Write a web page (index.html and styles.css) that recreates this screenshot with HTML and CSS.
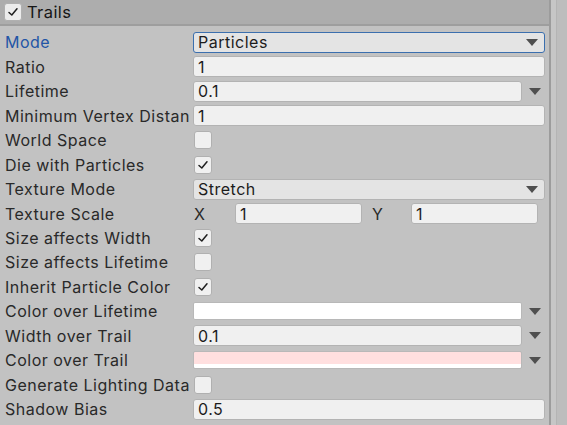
FILE: index.html
```html
<!DOCTYPE html>
<html>
<head>
<meta charset="utf-8">
<link rel="stylesheet" href="styles.css">
</head>
<body>
<div class="window">
  <div class="panel">
    <div class="header">
      <span class="check hdr-check"><svg viewBox="0 0 12 12"><path d="M2 6.5 L4.8 9 L10 2.8" /></svg></span>
      <span class="title">Trails</span>
    </div>
    <div class="rows">
      <div class="row"><span class="label active">Mode</span><div class="field select focus"><span>Particles</span><i class="tri"></i></div></div>
      <div class="row"><span class="label">Ratio</span><div class="field"><span>1</span></div></div>
      <div class="row"><span class="label">Lifetime</span><div class="wide"><div class="field"><span>0.1</span></div><i class="tri ext"></i></div></div>
      <div class="row"><span class="label">Minimum Vertex Distance</span><div class="field"><span>1</span></div></div>
      <div class="row"><span class="label">World Space</span><span class="check"></span></div>
      <div class="row"><span class="label">Die with Particles</span><span class="check"><svg viewBox="0 0 12 12"><path d="M2 6.5 L4.8 9 L10 2.8" /></svg></span></div>
      <div class="row"><span class="label">Texture Mode</span><div class="field select"><span>Stretch</span><i class="tri"></i></div></div>
      <div class="row"><span class="label">Texture Scale</span><div class="xy"><span class="axis">X</span><div class="field small"><span>1</span></div><span class="axis y">Y</span><div class="field small"><span>1</span></div></div></div>
      <div class="row"><span class="label">Size affects Width</span><span class="check"><svg viewBox="0 0 12 12"><path d="M2 6.5 L4.8 9 L10 2.8" /></svg></span></div>
      <div class="row"><span class="label">Size affects Lifetime</span><span class="check"></span></div>
      <div class="row"><span class="label">Inherit Particle Color</span><span class="check"><svg viewBox="0 0 12 12"><path d="M2 6.5 L4.8 9 L10 2.8" /></svg></span></div>
      <div class="row"><span class="label">Color over Lifetime</span><div class="wide"><div class="color white"></div><i class="tri ext"></i></div></div>
      <div class="row"><span class="label">Width over Trail</span><div class="wide"><div class="field"><span>0.1</span></div><i class="tri ext"></i></div></div>
      <div class="row"><span class="label">Color over Trail</span><div class="wide"><div class="color pink"></div><i class="tri ext"></i></div></div>
      <div class="row"><span class="label">Generate Lighting Data</span><span class="check"></span></div>
      <div class="row"><span class="label">Shadow Bias</span><div class="field"><span>0.5</span></div></div>
    </div>
  </div>
  <div class="scrollbar"><div class="track"></div></div>
</div>
</body>
</html>
```
FILE: styles.css
```css
* { box-sizing: border-box; }
html, body { margin: 0; padding: 0; }
body {
  width: 567px;
  height: 425px;
  overflow: hidden;
  background: #c2c2c2;
  font-family: Inter, "Noto Sans", sans-serif;
  font-size: 16px;
  color: #292929;
}
.window { display: flex; height: 425px; }
.panel { width: 551px; flex: none; border-right: 2px solid #9c9c9c; background: #c2c2c2; }
.header {
  height: 26px;
  background: #adadad;
  border-bottom: 2px solid #9e9e9e;
  display: flex;
  align-items: center;
  padding-left: 4px;
  gap: 5px;
}
.title { font-size: 16.5px; color: #161616; letter-spacing: 0.4px; }
.rows { padding-top: 4px; }
.row {
  height: 24.47px;
  display: flex;
  align-items: center;
}
.label {
  width: 190px;
  margin-right: 3px;
  flex: none;
  padding-left: 5px;
  white-space: nowrap;
  overflow: hidden;
  letter-spacing: 0.5px;
}
.label.active { color: #2355a6; }
.field {
  flex: 1;
  height: 21px;
  margin-right: 4px;
  background: #f0f0f0;
  border: 1px solid #b3b3b3;
  border-radius: 3px;
  display: flex;
  align-items: center;
  padding-left: 4px;
  letter-spacing: 0.5px;
  color: #1c1c1c;
}
.field.select { background: #e4e4e4; justify-content: space-between; padding-right: 6px; }
.field.focus { border: 1.5px solid #3b6fae; }
.tri {
  width: 0; height: 0;
  border-left: 6px solid transparent;
  border-right: 6px solid transparent;
  border-top: 7px solid #4f4f4f;
}
.wide { flex: 1; display: flex; align-items: center; margin-right: 4px; }
.wide .field { margin-right: 0; }
.tri.ext { margin: 0 4px 0 7px; }
.color {
  flex: 1;
  height: 18px;
  border: 1px solid #b8b8b8;
  border-radius: 2px;
}
.color.white { background: #ffffff; }
.color.pink { background: linear-gradient(#ffdfdf 0 72%, #ffffff 72% 100%); }
.check {
  width: 18px; height: 18px;
  flex: none;
  margin-left: 1px;
  background: #f0f0f0;
  border: 1px solid #b0b0b0;
  border-radius: 3px;
  display: flex; align-items: center; justify-content: center;
}
.hdr-check { margin-left: 0; background: #ececec; }
.check svg { width: 12px; height: 12px; }
.check path { fill: none; stroke: #1e1e1e; stroke-width: 1.5; stroke-linecap: round; stroke-linejoin: round; }
.xy { flex: none; display: flex; align-items: center; }
.axis { width: 42px; flex: none; padding-left: 1px; }
.axis.y { width: 49px; padding-left: 10px; }
.field.small { flex: none; width: 127px; margin-right: 0; }
.scrollbar { flex: 1; background: #c6c6c6; display: flex; justify-content: flex-end; }
.track { width: 11px; background: #bdbdbd; border-left: 1px solid #b4b4b4; }
```
